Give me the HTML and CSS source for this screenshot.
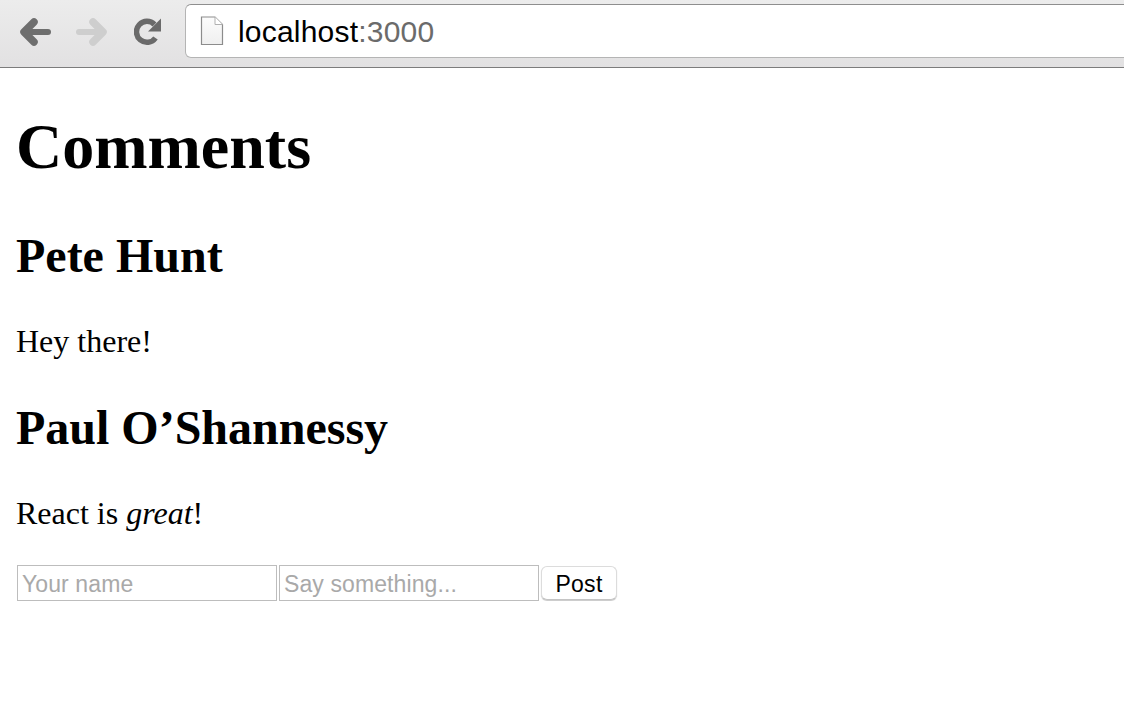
FILE: index.html
```html
<!DOCTYPE html>
<html lang="en">
<head>
    <meta charset="UTF-8">
    <meta name="viewport" content="width=device-width, initial-scale=1.0">
    <title>Comments</title>
    <link rel="stylesheet" href="styles.css">
</head>
<body>
    <div class="toolbar">
        <svg class="nav-icon back" width="32" height="28" viewBox="0 0 32 28">
            <path d="M14 4 L4 14 L14 24" fill="none" stroke="#6e6e6e" stroke-width="7.5" stroke-linecap="round" stroke-linejoin="round"/>
            <path d="M5 14 H28" fill="none" stroke="#6e6e6e" stroke-width="6" stroke-linecap="round"/>
        </svg>
        <svg class="nav-icon forward" width="32" height="28" viewBox="0 0 32 28">
            <path d="M18 4 L28 14 L18 24" fill="none" stroke="#cecece" stroke-width="7.5" stroke-linecap="round" stroke-linejoin="round"/>
            <path d="M27 14 H4" fill="none" stroke="#cecece" stroke-width="6" stroke-linecap="round"/>
        </svg>
        <svg class="nav-icon reload" width="28" height="28" viewBox="0 0 28 28">
            <path d="M21.5 20 A10.5 10.5 0 1 1 20.5 6.5" fill="none" stroke="#6a6a6a" stroke-width="5.5"/>
            <path d="M27 0.5 V13.5 H14 Z" fill="#6a6a6a"/>
        </svg>
        <div class="address">
            <svg class="page-icon" width="24" height="30" viewBox="0 0 24 30">
                <defs>
                    <linearGradient id="pageFill" x1="0" y1="0" x2="0" y2="1">
                        <stop offset="0" stop-color="#fcfcfc"/>
                        <stop offset="1" stop-color="#efefef"/>
                    </linearGradient>
                </defs>
                <path d="M1.5 1 H15 L22.5 8.5 V28.5 H1.5 Z" fill="url(#pageFill)" stroke="#8c8c8c" stroke-width="1.2"/>
                <path d="M15 1 V8.5 H22.5" fill="#fff" stroke="#b0b0b0" stroke-width="1"/>
            </svg>
            <span class="host">localhost<span class="port">:3000</span></span>
        </div>
    </div>

    <div class="content">
        <h1>Comments</h1>
        <div class="comment">
            <h2>Pete Hunt</h2>
            <p>Hey there!</p>
        </div>
        <div class="comment">
            <h2>Paul O’Shannessy</h2>
            <p>React is <em>great</em>!</p>
        </div>
        <form class="comment-form">
            <input type="text" placeholder="Your name">
            <input type="text" placeholder="Say something...">
            <button type="button">Post</button>
        </form>
    </div>
</body>
</html>
```
FILE: styles.css
```css
body {
    margin: 0;
    font-family: "Liberation Serif", serif;
    font-size: 32px;
    background: #fff;
    color: #000;
}
.toolbar {
    height: 67px;
    border-bottom: 1px solid #7c7c7c;
    background: linear-gradient(#ececec, #e2e1e2);
    display: flex;
    align-items: flex-start;
    overflow: hidden;
}
.nav-icon {
    flex: none;
    margin-top: 18px;
}
.back {
    margin-left: 20px;
}
.forward {
    margin-left: 23px;
}
.reload {
    margin-left: 27px;
}
.address {
    flex: 1;
    height: 52px;
    margin: 4px -12px 0 23px;
    border: 1px solid #b4b4b4;
    border-top-color: #8e8e8e;
    border-radius: 6px;
    background: #fff;
    display: flex;
    align-items: center;
}
.page-icon {
    margin-left: 14px;
}
.host {
    margin: 2px 0 0 14px;
    font-family: "Liberation Sans", sans-serif;
    font-size: 30px;
    letter-spacing: 0.2px;
    color: #000;
}
.port {
    color: #6b6b6b;
}
.content {
    padding: 0 16px;
}
h1 {
    font-size: 64px;
    margin: 42px 0 44px;
}
h2 {
    font-size: 48px;
    margin: 40px 0;
}
p {
    margin: 32px 0;
}
.comment-form {
    display: flex;
    align-items: center;
    gap: 2px;
    margin: 33px 0 0 1px;
}
input {
    width: 260px;
    height: 36px;
    box-sizing: border-box;
    padding: 2px 4px 0;
    border: 1px solid #bdbdbd;
    font-family: "Liberation Sans", sans-serif;
    font-size: 23px;
    letter-spacing: 0.1px;
}
input::placeholder {
    color: #a9a9a9;
}
button {
    width: 76px;
    height: 34px;
    padding: 2px 0 0;
    border: 1px solid #dcdcdc;
    border-bottom-color: #c4c4c4;
    border-radius: 6px;
    background: #fff;
    box-shadow: 0 1px 1px #c8c8c8;
    font-family: "Liberation Sans", sans-serif;
    font-size: 23px;
    letter-spacing: 0.3px;
    color: #000;
}
```
